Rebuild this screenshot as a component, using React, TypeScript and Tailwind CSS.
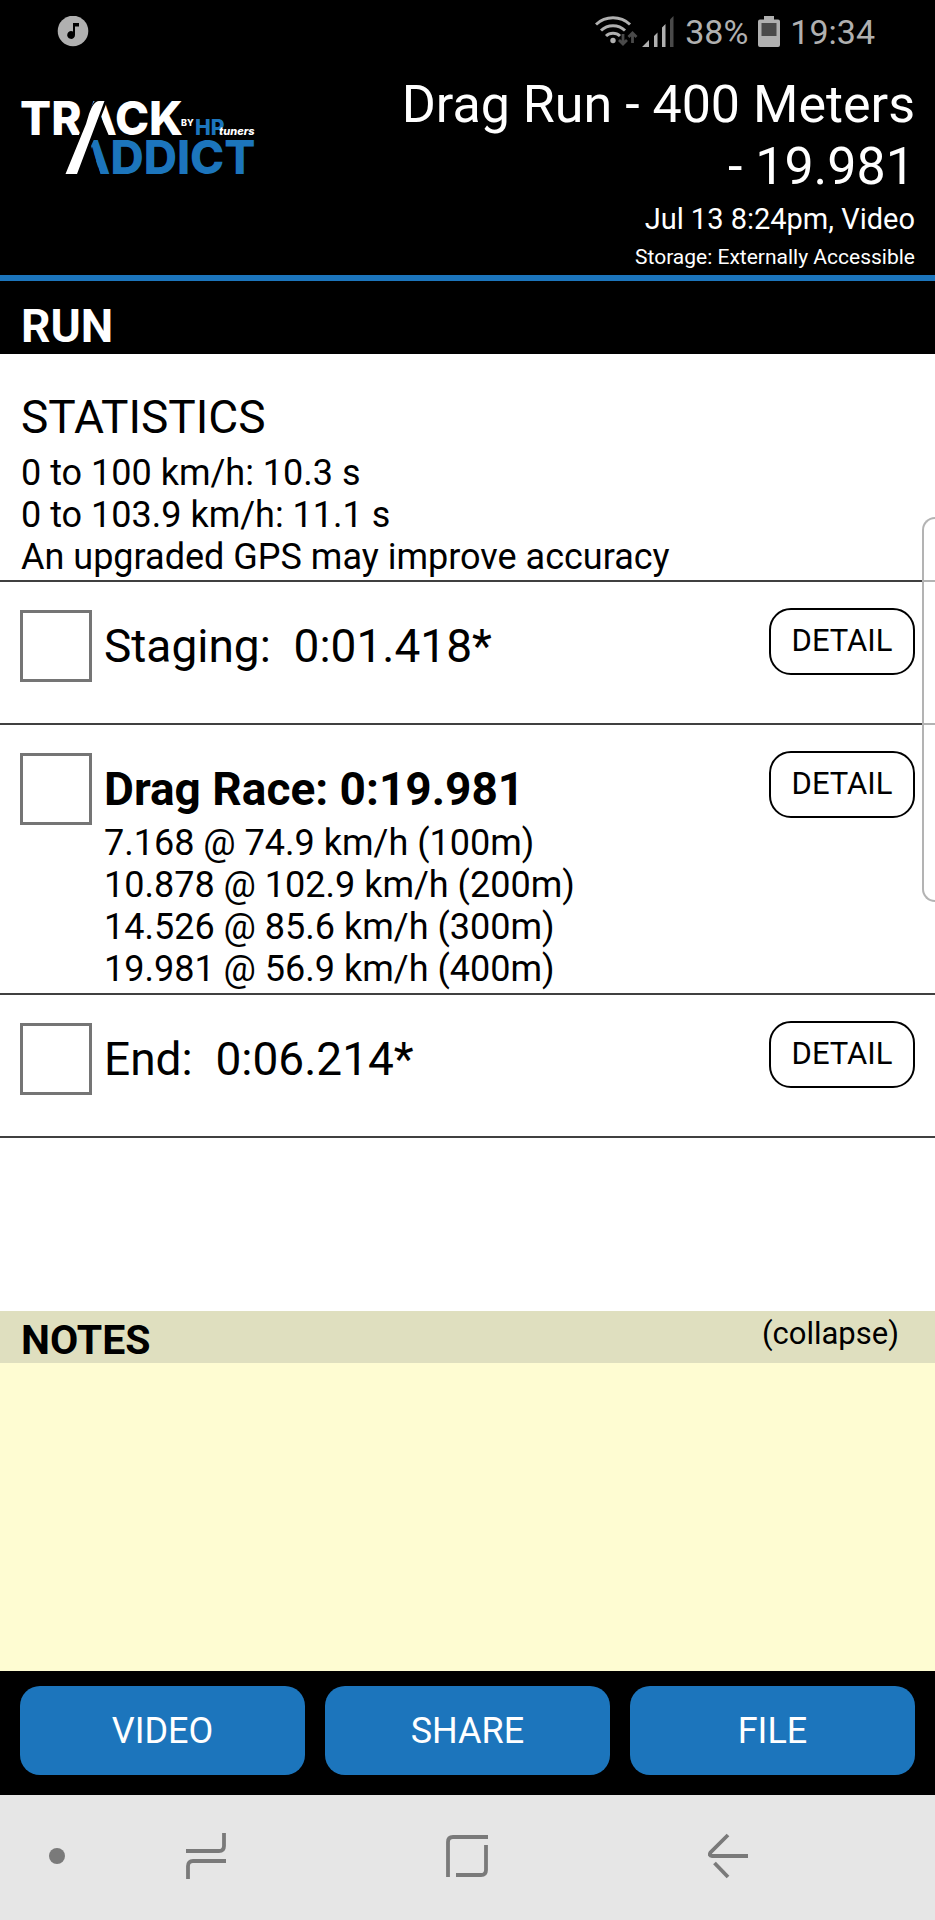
import { useState } from "react";

interface Segment {
  id: string;
  title: string;
  bold?: boolean;
  splits: string[];
}

const stats = [
  "0 to 100 km/h: 10.3 s",
  "0 to 103.9 km/h: 11.1 s",
  "An upgraded GPS may improve accuracy",
];

const segments: Segment[] = [
  { id: "staging", title: "Staging:  0:01.418*", splits: [] },
  {
    id: "race",
    title: "Drag Race: 0:19.981",
    bold: true,
    splits: [
      "7.168 @ 74.9 km/h (100m)",
      "10.878 @ 102.9 km/h (200m)",
      "14.526 @ 85.6 km/h (300m)",
      "19.981 @ 56.9 km/h (400m)",
    ],
  },
  { id: "end", title: "End:  0:06.214*", splits: [] },
];

const actions = ["VIDEO", "SHARE", "FILE"];

function StatusBar() {
  return (
    <div className="flex h-16 items-center justify-between pl-[57px] pr-[60px] text-[#b0b0b0]">
      <svg className="size-8" viewBox="0 0 32 32" aria-hidden="true">
        <circle cx="16" cy="15" r="15.3" fill="#b0b0b0" />
        <path d="M16 7h6v3.500h-4V19a3.900 3.900 0 1 1-2-3.400z" fill="#000" />
      </svg>
      <div className="flex items-center gap-2.5 text-[34px] leading-10">
        <svg className="h-8 w-20" viewBox="0 0 80 32" fill="none" aria-hidden="true">
          <g stroke="#b0b0b0" strokeWidth="3">
            <path d="M1 8.500a25 25 0 0 1 34 0" />
            <path d="M6 14.500a17.500 17.500 0 0 1 24 0" />
            <path d="M11 20a10 10 0 0 1 14 0" />
          </g>
          <circle cx="18" cy="24.500" r="2.700" fill="#b0b0b0" />
          <path d="M28 18v9M24 24l4 4 4-4M37.500 27v-9M33.500 21l4-4 4 4" stroke="#4a4a4a" strokeWidth="2.800" />
          <path d="M47 31h7v-7zM59 31h3.500V16.500L59 20zM67 31h3.500V8L67 11.500z" fill="#b0b0b0" />
          <path d="M75 31h3.500V0L75 3.500z" fill="#4a4a4a" />
        </svg>
        <span>38%</span>
        <svg className="h-8 w-[22px]" viewBox="0 0 22 32" aria-hidden="true">
          <path d="M6 0h10v3.500h4a2 2 0 0 1 2 2V29a2 2 0 0 1-2 2H2a2 2 0 0 1-2-2V5.500a2 2 0 0 1 2-2h4z" fill="#b0b0b0" />
          <path d="M3.500 7h15v13h-15z" fill="#4a4a4a" />
        </svg>
        <span>19:34</span>
      </div>
    </div>
  );
}

function Logo() {
  return (
    <svg className="mt-[34px] h-20 w-[236px] shrink-0 overflow-visible" viewBox="20 98 236 80" role="img" aria-label="Track Addict by HP Tuners">
      <g fontFamily="Inter, sans-serif" fontWeight="800">
        <text x="20" y="134.500" fontSize="46" fill="#fff">TRACK</text>
        <text x="75" y="174" fontSize="46" fill="#1c75bc">ADDICT</text>
        <text x="181" y="125.500" fontSize="9" fill="#fff">BY</text>
        <text x="195" y="134.500" fontSize="21" fill="#1c75bc">HP</text>
        <text x="219" y="134.500" fontSize="11" fontStyle="italic" fill="#fff">tuners</text>
      </g>
      {/* road stripe, with a black gap that cuts into both words */}
      <path d="M63 176L77 139L87 117C91 107 94 99 99 98H108.500L101 117L109 136H95.500L91 146L101 176z" fill="#000" />
      <path d="M65.500 174L86 124L89 114C92 106 95 101 99 101H104.500L77 174z" fill="#fff" />
    </svg>
  );
}

function Header() {
  return (
    <header className="flex justify-between border-b-[6px] border-[#1c75bc] px-5 pb-[5px]">
      <Logo />
      <div className="pt-2.5 text-right">
        <h1 className="ml-auto max-w-[520px] text-[52px] leading-[62px]">Drag Run - 400 Meters - 19.981</h1>
        <p className="mt-1 text-[29px] leading-[34px]">Jul 13 8:24pm, Video</p>
        <p className="mt-[9px] text-[21px] leading-[25px]">Storage: Externally Accessible</p>
      </div>
    </header>
  );
}

function SegmentRow({ segment }: { segment: Segment }) {
  return (
    <li className="flex min-h-[143px] items-start border-b-2 border-neutral-700 px-5 pb-[3px]">
      <input
        id={segment.id}
        type="checkbox"
        className="mt-7 size-[72px] shrink-0 appearance-none border-[3px] border-[#757575] bg-white checked:bg-[#1c75bc]"
      />
      <div className="ml-3 flex-1 pt-[37px]">
        <label
          htmlFor={segment.id}
          className={segment.bold ? "block whitespace-pre text-[46px] font-bold leading-[54px]" : "block whitespace-pre text-[46px] leading-[54px]"}
        >
          {segment.title}
        </label>
        {segment.splits.length > 0 && (
          <div className="mt-1.5 text-[36px] leading-[42px]">
            {segment.splits.map((split) => (
              <p key={split}>{split}</p>
            ))}
          </div>
        )}
      </div>
      <button className="mt-[26px] h-[67px] w-[146px] rounded-[22px] border-2 border-black text-[31px]">DETAIL</button>
    </li>
  );
}

function Notes() {
  const [open, setOpen] = useState(true);

  return (
    <section>
      <div className="flex h-[52px] items-start justify-between bg-[#dfdfbf] pl-[21px] pr-9">
        <h2 className="pt-1.5 text-[41px] font-bold leading-[46px]">
          <label htmlFor="notes">NOTES</label>
        </h2>
        <button className="pt-1 text-[31px] leading-[38px]" onClick={() => setOpen(!open)}>
          {open ? "(collapse)" : "(expand)"}
        </button>
      </div>
      {open && <textarea id="notes" className="block h-[308px] w-full resize-none bg-[#fefcd2] px-5 py-2 text-[36px] outline-none" />}
    </section>
  );
}

function NavBar() {
  return (
    <nav className="flex h-[125px] items-center bg-[#e6e6e6] pb-1 pr-[77px]">
      <div className="flex w-[75px] justify-end pr-2.5">
        <button aria-label="Hide navigation bar" className="size-4 rounded-full bg-[#7a7a7a]" />
      </div>
      <div className="grid flex-1 grid-cols-3 justify-items-center">
        <button aria-label="Recent apps">
          <svg className="h-12 w-10" viewBox="0 0 40 48" fill="none" stroke="#7a7a7a" strokeWidth="3.800">
            <path d="M0 19h33q5 0 5-5V1" />
            <path d="M40 29H7q-5 0-5 5v13" />
          </svg>
        </button>
        <button aria-label="Home">
          <svg className="h-12 w-[42px]" viewBox="0 0 42 48" fill="none" stroke="#7a7a7a" strokeWidth="3.800">
            <path d="M2 45V10q0-5 5-5h35" />
            <path d="M10 43h25q5 0 5-5V13" />
          </svg>
        </button>
        <button aria-label="Back">
          <svg className="h-12 w-10" viewBox="0 0 40 48" fill="none" stroke="#7a7a7a" strokeWidth="3.800">
            <path d="M20 3L2.500 20.500q-2 3.500 1.500 3.500H40" />
            <path d="M6.500 31L20 45" />
          </svg>
        </button>
      </div>
    </nav>
  );
}

export default function App() {
  return (
    <div className="flex min-h-screen flex-col bg-white font-['Roboto',sans-serif] text-black">
      <div className="bg-black text-white">
        <StatusBar />
        <Header />
        <h2 className="px-[21px] pb-px pt-[18px] text-[46px] font-bold leading-[54px]">RUN</h2>
      </div>

      <main className="relative flex-1">
        <section className="border-b-2 border-neutral-700 px-[21px] pb-0.5 pt-9">
          <h2 className="text-[46px] leading-[54px]">STATISTICS</h2>
          <div className="mt-2 text-[36px] leading-[42px]">
            {stats.map((line) => (
              <p key={line}>{line}</p>
            ))}
          </div>
        </section>
        <ul>
          {segments.map((segment) => (
            <SegmentRow key={segment.id} segment={segment} />
          ))}
        </ul>
        {/* edge panel handle */}
        <div className="absolute right-0 top-[163px] h-[385px] w-[13px] rounded-l-[14px] border-2 border-r-0 border-[#b3b3b3] bg-white/60" />
      </main>

      <Notes />

      <div className="grid grid-cols-3 gap-5 bg-black px-5 pb-5 pt-[15px] text-white">
        {actions.map((action) => (
          <button key={action} className="h-[89px] rounded-[20px] bg-[#1c75bc] text-[36px]">
            {action}
          </button>
        ))}
      </div>
      <NavBar />
    </div>
  );
}
